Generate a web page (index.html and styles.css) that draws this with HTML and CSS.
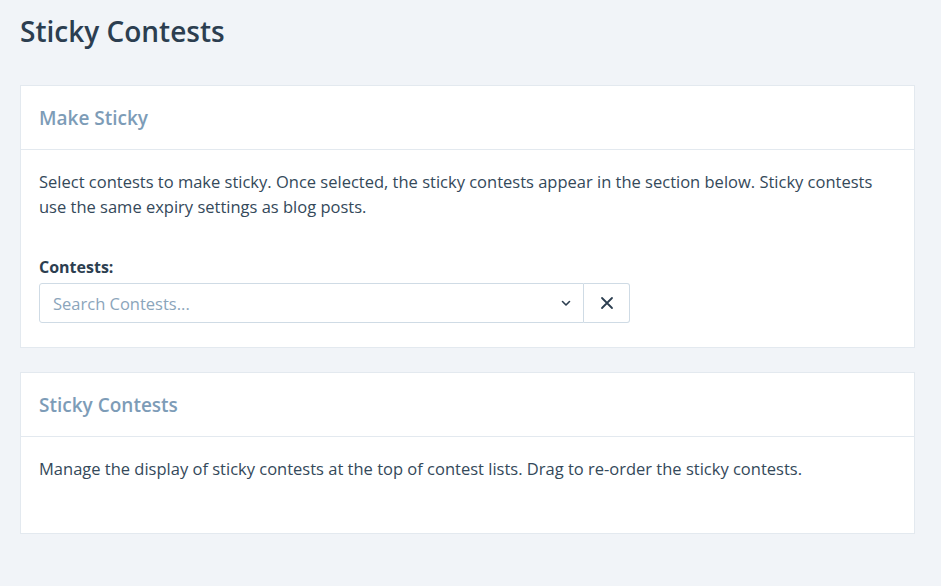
FILE: index.html
```html
<!DOCTYPE html>
<html>
<head>
<meta charset="utf-8">
<link rel="stylesheet" href="styles.css">
</head>
<body>
<div class="page">
  <h1 class="page-title">Sticky Contests</h1>
  <section class="card">
    <header class="card-header"><h2>Make Sticky</h2></header>
    <div class="card-body">
      <p class="desc">Select contests to make sticky. Once selected, the sticky contests appear in the section below. Sticky contests use the same expiry settings as blog posts.</p>
      <label class="field-label">Contests:</label>
      <div class="select-row">
        <div class="select">
          <span class="placeholder">Search Contests...</span>
          <svg class="chevron" width="10" height="7" viewBox="0 0 10 7"><path d="M1.5 1.5 L5 5 L8.5 1.5" fill="none" stroke="#2c3e50" stroke-width="1.6" stroke-linecap="round" stroke-linejoin="round"/></svg>
        </div>
        <button class="clear-btn"><svg width="14" height="14" viewBox="0 0 14 14"><path d="M2 2 L12 12 M12 2 L2 12" stroke="#2c3e50" stroke-width="1.8" stroke-linecap="round"/></svg></button>
      </div>
    </div>
  </section>
  <section class="card">
    <header class="card-header"><h2>Sticky Contests</h2></header>
    <div class="card-body body-2">
      <p class="desc">Manage the display of sticky contests at the top of contest lists. Drag to re-order the sticky contests.</p>
    </div>
  </section>
</div>
</body>
</html>
```
FILE: styles.css
```css
html, body {
  margin: 0;
  padding: 0;
  background: #f1f4f8;
  font-family: "Open Sans", "Noto Sans", sans-serif;
}
.page {
  padding: 10px 26px 0 20px;
}
.page-title {
  margin: 0 0 33px;
  font-size: 28px;
  line-height: 42px;
  font-weight: 600;
  color: #2c3e50;
}
.card {
  background: #fff;
  border: 1px solid #e3e9ef;
  margin-bottom: 24px;
}
.card-header {
  height: 63px;
  display: flex;
  align-items: center;
  padding: 0 18px;
  border-bottom: 1px solid #e3e9ef;
}
.card-header h2 {
  margin: 0;
  font-size: 19px;
  font-weight: 600;
  color: #7d9cb7;
}
.card-body {
  padding: 19px 18px 24px;
}
.body-2 {
  padding-bottom: 52px;
}
.desc {
  margin: 0;
  font-size: 16.5px;
  line-height: 25px;
  color: #34495a;
}
.field-label {
  display: block;
  margin-top: 36px;
  font-size: 16px;
  line-height: 24px;
  font-weight: 700;
  color: #2c3e50;
}
.select-row {
  display: flex;
  width: 591px;
  margin-top: 4px;
  height: 40px;
}
.select {
  flex: 1;
  display: flex;
  align-items: center;
  justify-content: space-between;
  border: 1px solid #cfdbe5;
  border-radius: 3px 0 0 3px;
  padding: 0 12px 0 13px;
}
.placeholder {
  font-size: 16.5px;
  color: #8ba5bb;
}
.chevron {
  display: block;
}
.clear-btn {
  width: 46px;
  height: 40px;
  border: 1px solid #cfdbe5;
  border-left: none;
  border-radius: 0 3px 3px 0;
  background: #fff;
  display: flex;
  align-items: center;
  justify-content: center;
  padding: 0;
}
```
